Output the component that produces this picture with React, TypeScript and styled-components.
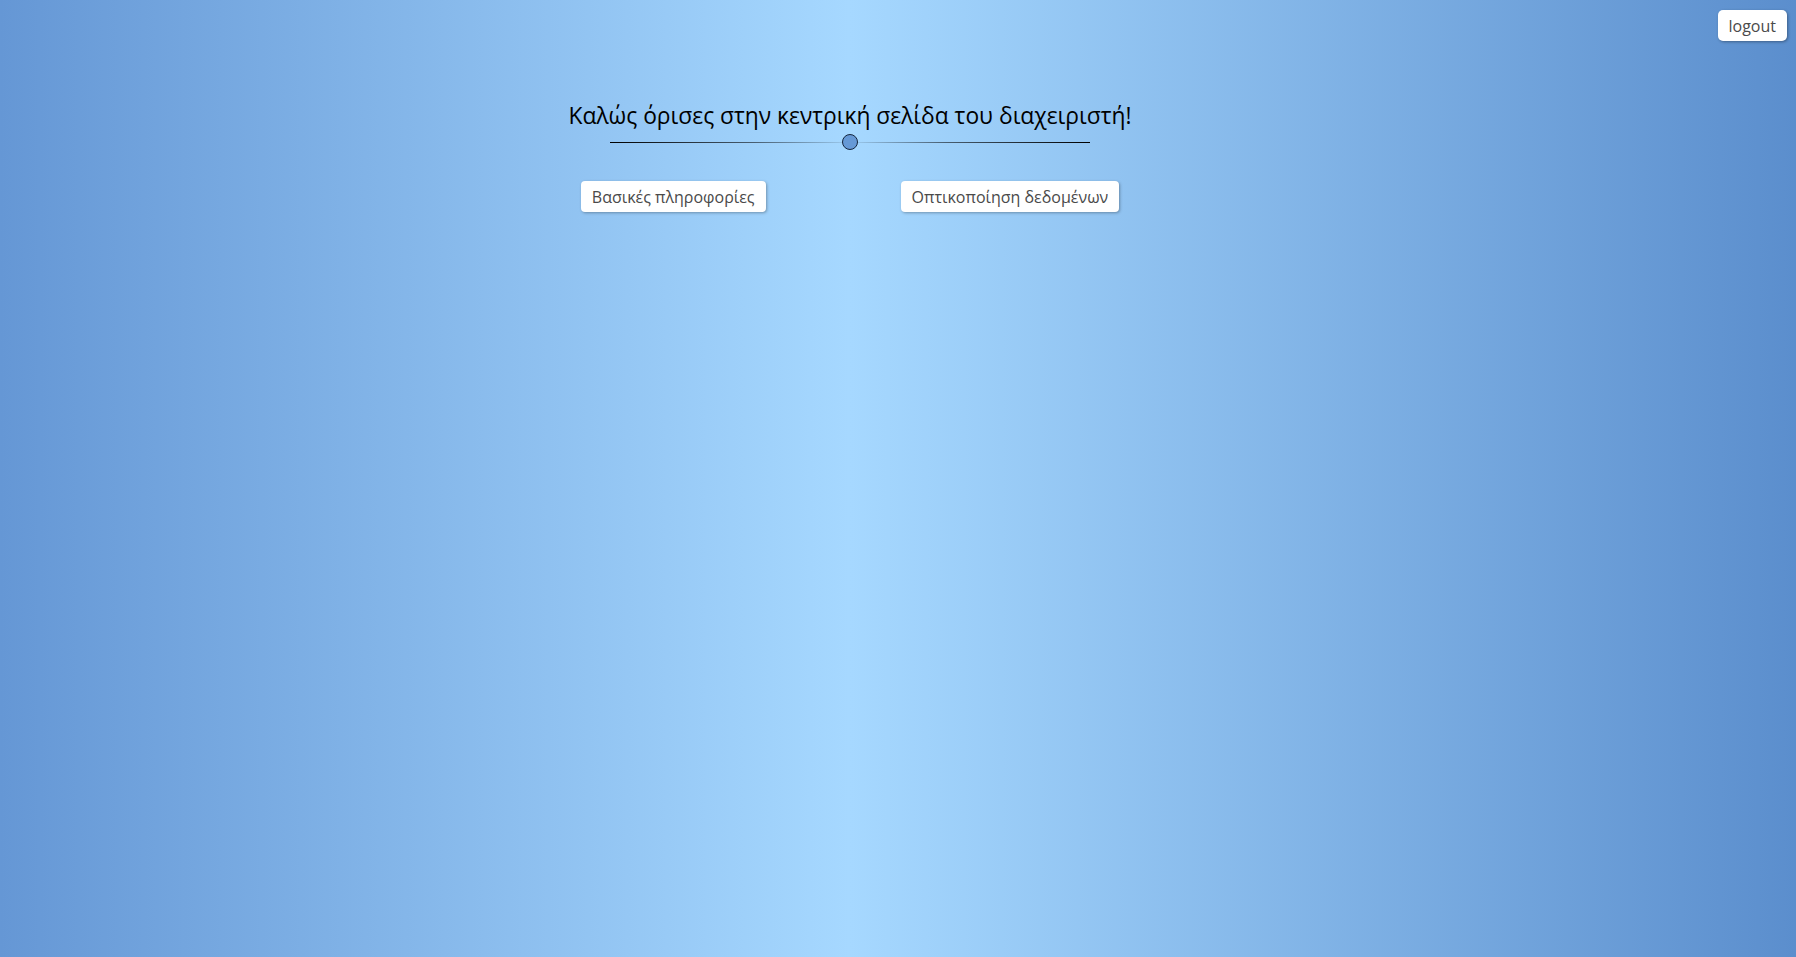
import React from "react";
import styled, { createGlobalStyle } from "styled-components";

const Global = createGlobalStyle`
  html, body { margin: 0; padding: 0; height: 100%; }
  body {
    font-family: "Open Sans", "DejaVu Sans", sans-serif;
    background: linear-gradient(to right, #6597d5 0%, #a6d8ff 47.3%, #5b8ecd 100%);
    min-height: 957px;
    overflow: hidden;
  }
`;

const Page = styled.div`
  position: relative;
  width: 1796px;
  height: 957px;
`;

const LogoutButton = styled.button`
  position: absolute;
  top: 10px;
  right: 9px;
  height: 31px;
  padding: 0 11px;
  background: #fff;
  border: none;
  border-radius: 5px;
  box-shadow: 1px 1px 3px rgba(0, 0, 0, 0.35);
  font-family: inherit;
  font-size: 16px;
  color: #4a4a4a;
  cursor: pointer;
`;

const Main = styled.main`
  width: 1700px;
  display: flex;
  flex-direction: column;
  align-items: center;
  padding-top: 101px;
`;

const Title = styled.h1`
  margin: 0;
  font-weight: 400;
  font-size: 22.8px;
  color: #000;
  line-height: 30px;
`;

const Divider = styled.div`
  margin-top: 3px;
  width: 480px;
  height: 16px;
  display: flex;
  align-items: center;
  justify-content: center;
  background: linear-gradient(
      to right,
      #000 0%,
      rgba(0, 0, 0, 0.55) 30%,
      rgba(0, 0, 0, 0.05) 50%,
      rgba(0, 0, 0, 0.55) 70%,
      #000 100%
    )
    center / 100% 1px no-repeat;
`;

const Dot = styled.span`
  width: 14px;
  height: 14px;
  border-radius: 50%;
  background: #6699d6;
  border: 1.5px solid #15263d;
`;

const ButtonRow = styled.div`
  margin-top: 31px;
  display: flex;
  gap: 135px;
`;

const NavButton = styled.button`
  height: 31px;
  padding: 0 11px;
  background: #fff;
  border: none;
  border-radius: 4px;
  box-shadow: 1px 1px 3px rgba(0, 0, 0, 0.3);
  font-family: inherit;
  font-size: 16px;
  color: #4a4a4a;
  cursor: pointer;
`;

export default function App() {
  return (
    <Page>
      <Global />
      <LogoutButton>logout</LogoutButton>
      <Main>
        <Title>Καλώς όρισες στην κεντρική σελίδα του διαχειριστή!</Title>
        <Divider>
          <Dot />
        </Divider>
        <ButtonRow>
          <NavButton>Βασικές πληροφορίες</NavButton>
          <NavButton>Οπτικοποίηση δεδομένων</NavButton>
        </ButtonRow>
      </Main>
    </Page>
  );
}
